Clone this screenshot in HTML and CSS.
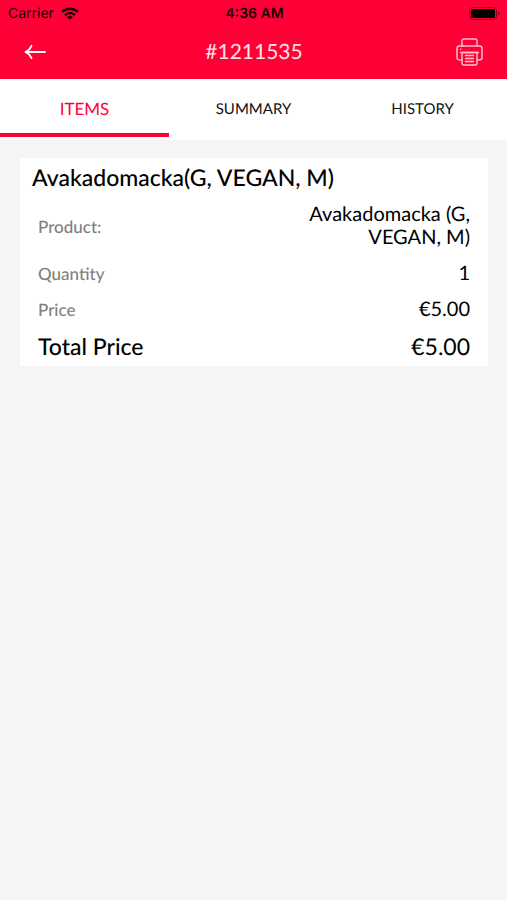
FILE: index.html
```html
<!DOCTYPE html>
<html lang="en">

<head>
    <meta charset="utf-8">
    <meta name="viewport" content="width=device-width, initial-scale=1">
    <title>#1211535</title>
    <link rel="stylesheet" href="styles.css">
</head>

<body>
    <header class="header">
        <div class="status-bar">
            <div class="carrier">
                Carrier
                <svg width="18" height="13" viewBox="0 0 18 13" fill="none" stroke="#1c0006" stroke-width="2.4">
                    <path d="M1 4.9C5.6 .6 12.4 .6 17 4.9" />
                    <path d="M4 8.1c2.9-2.7 7.1-2.7 10 0" />
                    <path d="M9 12.8L6.1 9.9c1.7-1.5 4.1-1.5 5.8 0z" fill="#1c0006" stroke="none" />
                </svg>
            </div>
            <div class="clock">4:36 AM</div>
            <div class="battery">
                <svg width="32" height="13" viewBox="0 0 32 13">
                    <rect x="0.5" y="0.5" width="27" height="12" rx="3" fill="none" stroke="#8c001c" />
                    <rect x="2" y="2" width="24" height="9" rx="1.5" fill="#000" />
                    <path d="M29 4.5c2 .7 2 3.3 0 4z" fill="#8c001c" />
                </svg>
            </div>
        </div>
        <div class="nav-bar">
            <button class="icon-button" type="button" aria-label="Back">
                <svg width="22" height="16" viewBox="0 0 22 16" fill="none" stroke="#fff" stroke-width="1.8" stroke-linecap="round" stroke-linejoin="round">
                    <path d="M21 8H1.5M7.5 1.8C6.2 4.8 4.2 6.9 1.5 8c2.7 1.1 4.7 3.2 6 6.2" />
                </svg>
            </button>
            <h1 class="order-number">#1211535</h1>
            <button class="icon-button print" type="button" aria-label="Print">
                <svg width="28" height="28" viewBox="0 0 28 28" fill="none" stroke="#ffc4d0" stroke-width="1.4" stroke-linejoin="round" stroke-linecap="round">
                    <path d="M6 8V3q0-2 2-2h11q2 0 2 2v5" />
                    <path d="M6 22H3.500q-2.500 0-2.500-2.500v-9Q1 8 3.500 8h20Q26 8 26 10.500v9q0 2.500-2.500 2.500H21" />
                    <path d="M6 14.500h15V25q0 2-2 2H8q-2 0-2-2z" />
                    <path d="M4.500 14.500h18M9.500 17.500h8M9.500 20.500h8M9.500 23.500h8M4.500 11.200h.2" />
                </svg>
            </button>
        </div>
    </header>

    <nav class="tabs">
        <a class="tab active" href="#items">ITEMS</a>
        <a class="tab" href="#summary">SUMMARY</a>
        <a class="tab" href="#history">HISTORY</a>
    </nav>

    <main class="content" id="items">
        <section class="card">
            <h2 class="card-title">Avakadomacka(G, VEGAN, M)</h2>
            <dl class="details">
                <div class="row">
                    <dt>Product:</dt>
                    <dd>Avakadomacka (G, VEGAN, M)</dd>
                </div>
                <div class="row">
                    <dt>Quantity</dt>
                    <dd>1</dd>
                </div>
                <div class="row">
                    <dt>Price</dt>
                    <dd>€5.00</dd>
                </div>
                <div class="row total">
                    <dt>Total Price</dt>
                    <dd>€5.00</dd>
                </div>
            </dl>
        </section>
    </main>
</body>

</html>
```

FILE: styles.css
```css
* {
    box-sizing: border-box;
}

body {
    margin: 0;
    background: #f5f5f5;
    color: #000;
    font-family: Lato, sans-serif;
    text-rendering: geometricPrecision;
}

.header {
    background: #ff0036;
}

.status-bar {
    display: grid;
    grid-template-columns: 1fr auto 1fr;
    align-items: center;
    height: 27px;
    padding: 0 6px 0 8px;
    font-family: Inter, "Liberation Sans", sans-serif;
    font-size: 14px;
    color: #1c0006;
}

.carrier {
    display: flex;
    align-items: center;
    gap: 7px;
}

.clock {
    font-weight: 600;
}

.battery {
    display: flex;
    justify-content: flex-end;
}

.nav-bar {
    display: grid;
    grid-template-columns: 1fr auto 1fr;
    align-items: center;
    height: 52px;
    padding: 0 23px 2px 24px;
}

.icon-button {
    display: flex;
    justify-self: start;
    padding: 0;
    border: none;
    background: none;
    cursor: pointer;
}

.icon-button.print {
    justify-self: end;
}

.order-number {
    margin: 0;
    font-size: 21px;
    font-weight: 400;
    line-height: 24px;
    color: #ffe0e6;
}

.tabs {
    display: flex;
    height: 61px;
    padding-bottom: 3px;
    background: #fff;
}

.tab {
    flex: 1;
    display: flex;
    align-items: center;
    justify-content: center;
    border-bottom: 4px solid transparent;
    padding-top: 5px;
    font-size: 15px;
    color: #111;
    text-decoration: none;
}

.tab.active {
    border-bottom-color: #ff0036;
    font-size: 17px;
    color: #ff0036;
}

.content {
    padding: 18px 19px 18px 20px;
}

.card {
    background: #fff;
}

.card-title {
    margin: 0;
    padding: 0 12px;
    font-size: 23px;
    font-weight: 500;
    line-height: 39px;
}

.details {
    margin: 0;
    padding: 0 18px;
}

.row {
    display: flex;
    align-items: center;
    justify-content: space-between;
    min-height: 36px;
    padding: 6px 0;
    line-height: 23px;
}

.row dt {
    font-size: 17px;
    font-weight: 500;
    color: #808080;
}

.row dd {
    width: 40%;
    margin: 0;
    font-size: 20px;
    text-align: right;
}

.row.total {
    min-height: 39px;
}

.row.total dt,
.row.total dd {
    font-size: 23px;
    color: #000;
}
```
